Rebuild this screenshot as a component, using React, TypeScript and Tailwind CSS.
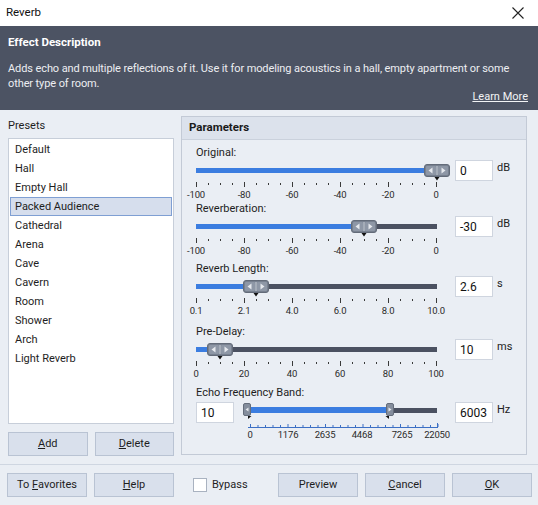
import React from 'react';

const PRESETS = [
  'Default',
  'Hall',
  'Empty Hall',
  'Packed Audience',
  'Cathedral',
  'Arena',
  'Cave',
  'Cavern',
  'Room',
  'Shower',
  'Arch',
  'Light Reverb',
];

const STEP = [0, 48, 96, 144, 192, 240];

function Thumb({ x }: { x: number }) {
  return (
    <svg className="absolute top-[4px]" style={{ left: x - 13 }} width="26" height="18" viewBox="0 0 26 18">
      <rect x="0.5" y="0.5" width="25" height="12" rx="2.5" fill="#77808f" stroke="#636b79" />
      <rect x="2" y="2" width="10" height="9" rx="1" fill="#8e97a6" />
      <rect x="14" y="2" width="10" height="9" rx="1" fill="#8e97a6" />
      <path d="M4.5 6.5 L8.5 3.5 L8.5 9.5 Z" fill="#e6e9ee" />
      <path d="M21.5 6.5 L17.5 3.5 L17.5 9.5 Z" fill="#e6e9ee" />
      <line x1="13" y1="2" x2="13" y2="11" stroke="#d3d8e0" />
      <path d="M10.5 13 L15.5 13 L13 16.5 Z" fill="#111" />
    </svg>
  );
}

function Ticks() {
  const ticks = Array.from({ length: 21 }, (_, i) => i);
  return (
    <svg width="243" height="6" className="block">
      {ticks.map((i) => (
        <line
          key={i}
          x1={i * 12 + 0.5}
          x2={i * 12 + 0.5}
          y1={i % 4 === 0 ? 0 : 1}
          y2={i % 4 === 0 ? 5 : 3}
          stroke="#3a3a3a"
          strokeWidth="1"
        />
      ))}
    </svg>
  );
}

type SliderProps = {
  label: string;
  value: string;
  unit: string;
  pos: number;
  marks: string[];
  className?: string;
};

function Slider({ label, value, unit, pos, marks, className }: SliderProps) {
  return (
    <div className={className}>
      <div className="h-[14px] leading-[14px] text-[11px] text-[#1e1e1e]">{label}</div>
      <div className="flex items-start h-[21px]">
        <div className="relative w-[241px] h-[21px]">
          <div className="absolute left-0 right-0 top-[8px] h-[5px] bg-[#4b5161]" />
          <div className="absolute left-0 top-[8px] h-[5px] bg-[#3b7de0]" style={{ width: pos }} />
          <Thumb x={pos} />
        </div>
        <div className="ml-[18px] w-[38px] h-[21px] bg-white border border-[#cfd5df] pl-[4px] leading-[20px] text-[12px] text-[#111]">
          {value}
        </div>
        <span className="ml-[4px] mt-[1px] text-[11px] leading-[14px] text-[#222]">{unit}</span>
      </div>
      <div className="mt-[1px]">
        <Ticks />
      </div>
      <div className="relative h-[12px] mt-[1px] w-[241px]">
        {marks.map((m, i) => (
          <span
            key={m}
            className="absolute top-0 -translate-x-1/2 text-[9.5px] leading-[12px] text-[#2a2a2a] tracking-[-0.2px]"
            style={{ left: STEP[i] }}
          >
            {m}
          </span>
        ))}
      </div>
    </div>
  );
}

function EchoBand() {
  const rulerTicks = Array.from({ length: 26 }, (_, i) => i);
  const marks = [
    { t: '0', x: 7 },
    { t: '1176', x: 45 },
    { t: '2635', x: 82 },
    { t: '4468', x: 119 },
    { t: '7265', x: 159 },
    { t: '22050', x: 194 },
  ];
  return (
    <div className="mt-[6px]">
      <div className="h-[14px] leading-[14px] text-[11px] text-[#1e1e1e]">Echo Frequency Band:</div>
      <div className="flex items-start h-[21px] mt-[2px]">
        <div className="w-[38px] h-[21px] bg-white border border-[#cfd5df] pl-[4px] leading-[20px] text-[12px] text-[#111]">
          10
        </div>
        <div className="relative ml-[9px] w-[194px] h-[21px]">
          <div className="absolute left-[150px] right-0 top-[6px] h-[5px] bg-[#4b5161]" />
          <div className="absolute left-[7px] w-[137px] top-[5px] h-[6px] bg-[#3b7de0]" />
          <svg className="absolute left-0 top-[1px]" width="9" height="17" viewBox="0 0 9 17">
            <rect x="0.5" y="0.5" width="7" height="12" rx="1.5" fill="#858e9d" stroke="#656d7b" />
            <path d="M2.5 6.5 L5.5 4.5 L5.5 8.5 Z" fill="#e6e9ee" />
            <path d="M5 13 L8.5 13 L5 16 Z" fill="#111" />
          </svg>
          <svg className="absolute left-[142px] top-[1px]" width="9" height="17" viewBox="0 0 9 17">
            <rect x="1.5" y="0.5" width="7" height="12" rx="1.5" fill="#858e9d" stroke="#656d7b" />
            <path d="M6.5 6.5 L3.5 4.5 L3.5 8.5 Z" fill="#e6e9ee" />
            <path d="M0.5 13 L4 13 L4 16 Z" fill="#111" />
          </svg>
        </div>
        <div className="ml-[18px] w-[38px] h-[21px] bg-white border border-[#cfd5df] pl-[4px] leading-[20px] text-[12px] text-[#111]">
          6003
        </div>
        <span className="ml-[4px] mt-[1px] text-[11px] leading-[14px] text-[#222]">Hz</span>
      </div>
      <svg width="196" height="5" className="block ml-[47px]">
        <line x1="5" x2="195" y1="4.5" y2="4.5" stroke="#3c6fc4" />
        {rulerTicks.map((i) => (
          <line key={i} x1={7.5 + i * 7.5} x2={7.5 + i * 7.5} y1={i % 5 === 0 ? 1 : 2} y2="4" stroke="#3c6fc4" />
        ))}
        <line x1="194.5" x2="194.5" y1="0" y2="4" stroke="#3c6fc4" />
      </svg>
      <div className="relative h-[12px] mt-[1px] ml-[47px]">
        {marks.map((m) => (
          <span
            key={m.t}
            className="absolute top-0 -translate-x-1/2 text-[9.5px] leading-[12px] text-[#2a2a2a] tracking-[-0.2px]"
            style={{ left: m.x }}
          >
            {m.t}
          </span>
        ))}
      </div>
    </div>
  );
}

function Btn({ children, className }: { children: React.ReactNode; className?: string }) {
  return (
    <button
      className={`w-[80px] h-[24px] bg-[#d9e0ec] border border-[#b9c3d3] text-[11px] text-[#1e1e1e] flex items-center justify-center ${className ?? ''}`}
    >
      <span>{children}</span>
    </button>
  );
}

export default function App() {
  return (
    <div className="w-[538px] h-[505px] bg-[#eaeef4] font-['Roboto',sans-serif] overflow-hidden">
      {/* Title bar */}
      <div className="h-[26px] bg-white flex items-center justify-between pl-[6px] pr-[14px]">
        <span className="text-[11.5px] text-[#111]">Reverb</span>
        <svg width="12" height="12" viewBox="0 0 12 12">
          <path d="M0.5 0.5 L11.5 11.5 M11.5 0.5 L0.5 11.5" stroke="#222" strokeWidth="1.1" />
        </svg>
      </div>

      {/* Description */}
      <div className="h-[84px] bg-[#4c5363] px-[8px] pt-[9px] text-white">
        <div className="text-[11.5px] font-bold leading-[14px]">Effect Description</div>
        <div className="mt-[12px] text-[11px] leading-[15px] text-[#eceef2] tracking-[-0.1px]">
          Adds echo and multiple reflections of it. Use it for modeling acoustics in a hall, empty apartment or some
          other type of room.
        </div>
        <div className="flex justify-end pr-[2px] -mt-[1px]">
          <span className="text-[11px] leading-[14px] underline text-[#f2f3f5]">Learn More</span>
        </div>
      </div>

      {/* Main */}
      <div className="flex gap-[7px] px-[8px] h-[346px]">
        <div className="w-[166px] flex flex-col pt-[9px]">
          <div className="text-[11px] leading-[14px] text-[#1e1e1e]">Presets</div>
          <div className="mt-[5px] h-[286px] bg-white border border-[#c7ced9] pt-[1px] px-[1px]">
            {PRESETS.map((p) => (
              <div
                key={p}
                className={`h-[19px] leading-[17px] pl-[4px] text-[11px] text-[#1e1e1e] border ${
                  p === 'Packed Audience' ? 'bg-[#d6deed] border-[#7f9fd3]' : 'border-transparent'
                }`}
              >
                {p}
              </div>
            ))}
          </div>
          <div className="flex gap-[7px] mt-[8px]">
            <Btn>
              <span className="underline">A</span>dd
            </Btn>
            <Btn>
              <span className="underline">D</span>elete
            </Btn>
          </div>
        </div>

        <div className="mt-[6px] w-[346px] h-[339px] border border-[#c3cad6] flex flex-col">
          <div className="h-[23px] bg-[#dce2ec] border-b border-[#cad1dc] pl-[7px] flex items-center text-[11.5px] font-bold text-[#1a1a1a]">
            Parameters
          </div>
          <div className="pl-[14px] pt-[6px]">
            <Slider label="Original:" value="0" unit="dB" pos={241} marks={['-100', '-80', '-60', '-40', '-20', '0']} />
            <Slider
              className="mt-[1px]"
              label="Reverberation:"
              value="-30"
              unit="dB"
              pos={168}
              marks={['-100', '-80', '-60', '-40', '-20', '0']}
            />
            <Slider
              className="mt-[5px]"
              label="Reverb Length:"
              value="2.6"
              unit="s"
              pos={60}
              marks={['0.1', '2.1', '4.0', '6.0', '8.0', '10.0']}
            />
            <Slider
              className="mt-[8px]"
              label="Pre-Delay:"
              value="10"
              unit="ms"
              pos={24}
              marks={['0', '20', '40', '60', '80', '100']}
            />
            <EchoBand />
          </div>
        </div>
      </div>

      {/* Footer */}
      <div className="mt-[8px] border-t border-[#cfd6e1]" />
      <div className="flex items-center pl-[7px] pr-[6px] pt-[8px]">
        <Btn>
          To <span className="underline">F</span>avorites
        </Btn>
        <Btn className="ml-[7px]">
          <span className="underline">H</span>elp
        </Btn>
        <div className="ml-[19px] w-[14px] h-[14px] bg-white border border-[#a9b2c0]" />
        <span className="ml-[5px] text-[11px] text-[#1e1e1e]">Bypass</span>
        <div className="ml-auto flex gap-[7px]">
          <Btn>Preview</Btn>
          <Btn>
            <span className="underline">C</span>ancel
          </Btn>
          <Btn>
            <span className="underline">O</span>K
          </Btn>
        </div>
      </div>
    </div>
  );
}
